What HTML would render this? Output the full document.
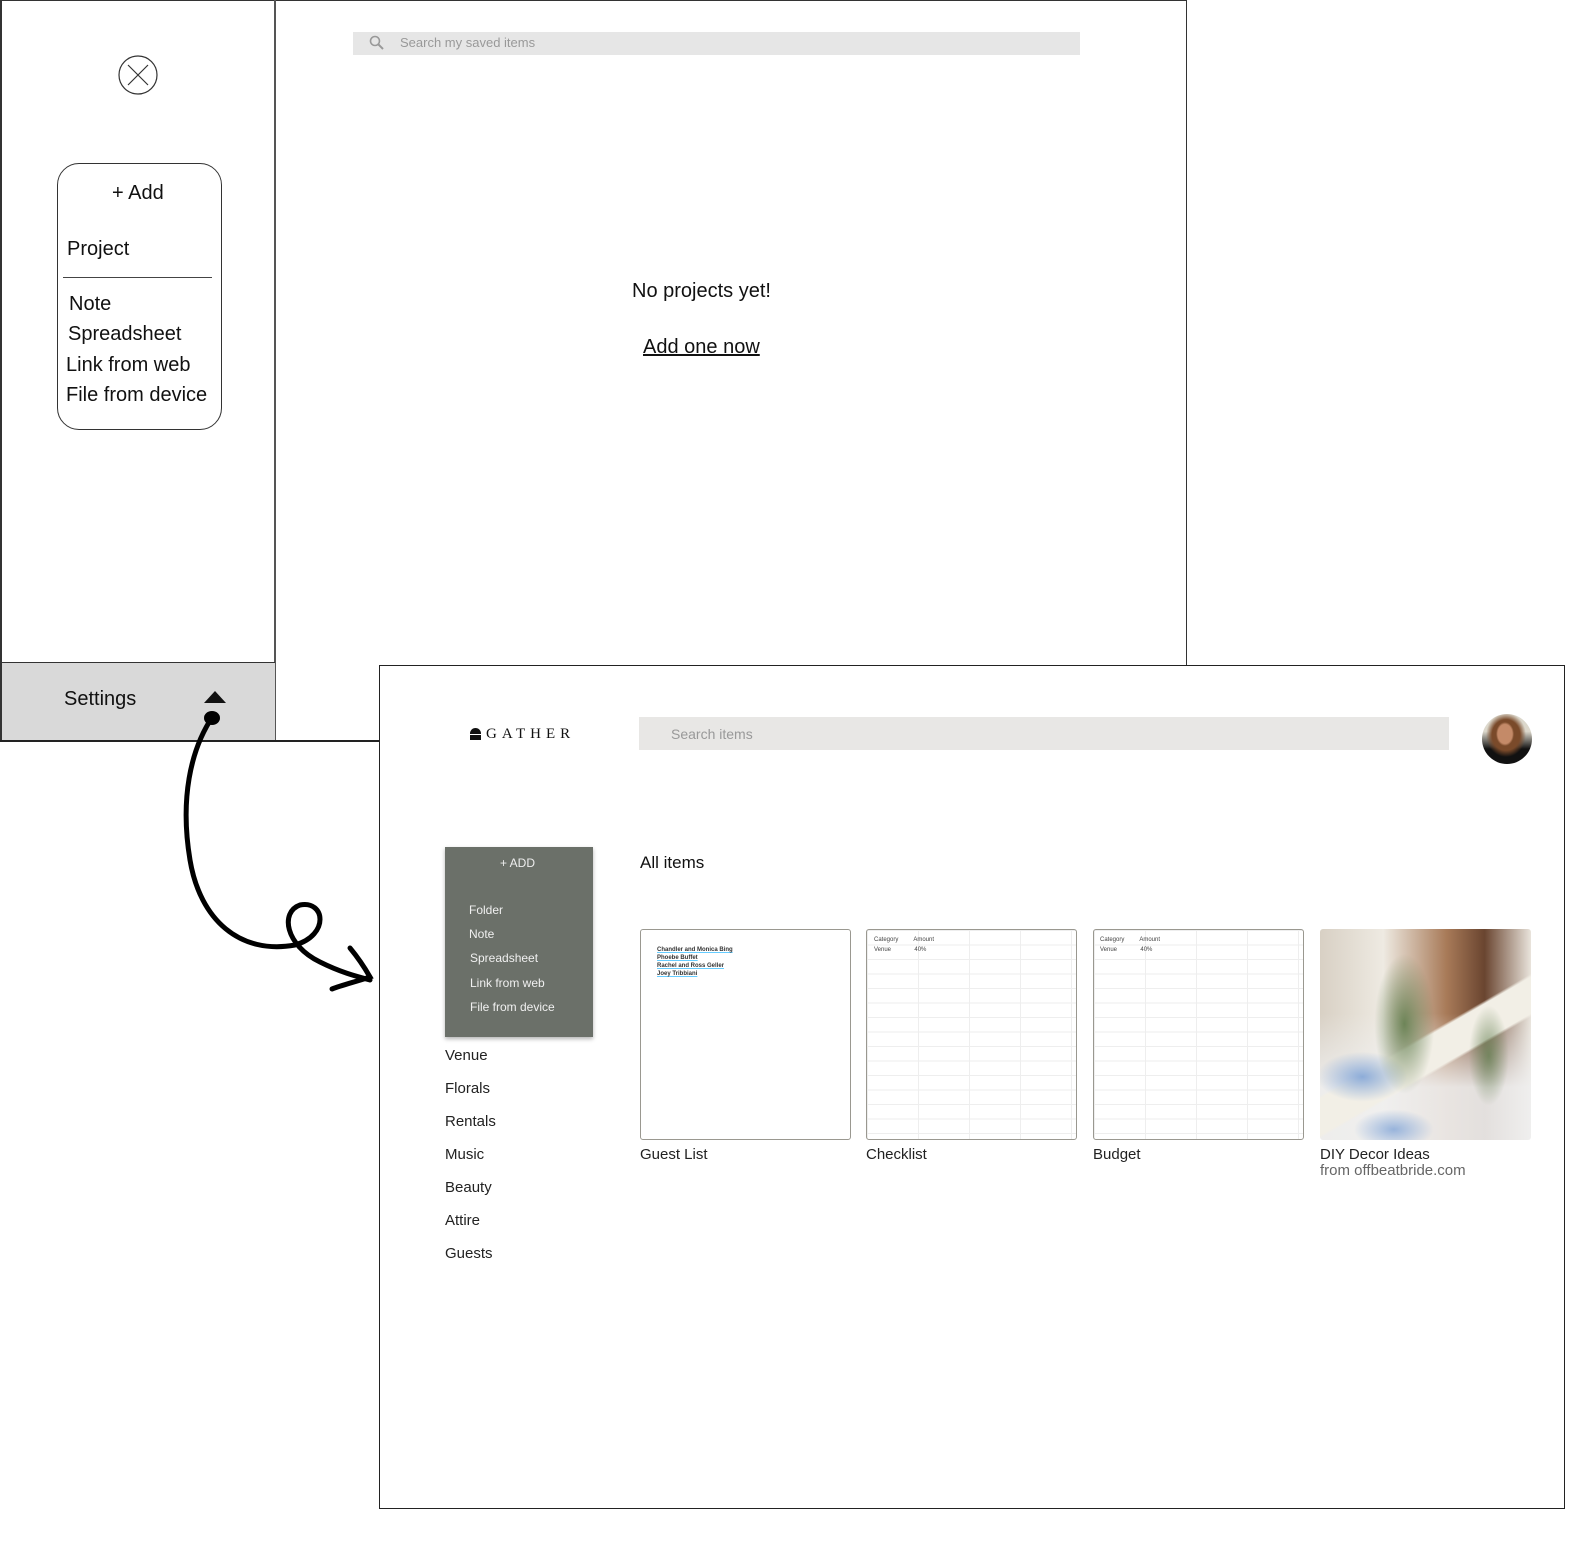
<!DOCTYPE html>
<html><head><meta charset="utf-8"><style>
*{margin:0;padding:0;box-sizing:border-box}
body{width:1586px;height:1557px;background:#fff;position:relative;overflow:hidden;font-family:"Liberation Sans",sans-serif;color:#111}
.a{position:absolute}
.grid{background-color:#fff;background-image:linear-gradient(#eee 1px,transparent 1px),linear-gradient(90deg,#eee 1px,transparent 1px);background-size:100% 14.5px,51px 100%}
.card{border:1.5px solid #9a9890;border-radius:3px}
.lab{font-size:15px;color:#222}
.side{font-size:15px;color:#222;left:445px}
.dd{color:#f0f0f0;font-size:12px;left:469px}
</style></head><body>
<div class="a" style="left:0;top:0;width:1187px;height:666px;border:1.5px solid #333;border-bottom:none"></div>
<div class="a" style="left:274px;top:0;width:1.5px;height:741px;background:#555"></div>
<div class="a" style="left:0;top:0;width:2px;height:741px;background:#333"></div>
<div class="a" style="left:2px;top:662px;width:273px;height:78px;background:#d9d9d9;border-top:1.5px solid #333"></div>
<div class="a" style="left:0;top:740px;width:380px;height:1.5px;background:#222"></div>
<div class="a" style="left:64px;top:688px;font-size:20px">Settings</div>
<div class="a" style="left:204px;top:691px;width:0;height:0;border-left:11px solid transparent;border-right:11px solid transparent;border-bottom:12px solid #111"></div>
<svg class="a" style="left:118px;top:55px" width="40" height="40"><circle cx="20" cy="20" r="19" fill="none" stroke="#333" stroke-width="1.2"/><path d="M10 10L30 30M30 10L10 30" stroke="#333" stroke-width="1.2"/></svg>
<div class="a" style="left:57px;top:163px;width:165px;height:267px;border:1.2px solid #333;border-radius:22px"></div>
<div class="a" style="left:112px;top:182px;font-size:20px">+ Add</div>
<div class="a" style="left:67px;top:238px;font-size:20px">Project</div>
<div class="a" style="left:63px;top:277px;width:149px;height:1.2px;background:#444"></div>
<div class="a" style="left:69px;top:293px;font-size:20px">Note</div>
<div class="a" style="left:68px;top:323px;font-size:20px">Spreadsheet</div>
<div class="a" style="left:66px;top:354px;font-size:20px">Link from web</div>
<div class="a" style="left:66px;top:384px;font-size:20px">File from device</div>
<div class="a" style="left:353px;top:32px;width:727px;height:23px;background:#e6e6e6"></div>
<svg class="a" style="left:369px;top:35px" width="16" height="16"><circle cx="6" cy="6" r="4.5" fill="none" stroke="#999" stroke-width="1.6"/><path d="M9.5 9.5L14 14" stroke="#999" stroke-width="2"/></svg>
<div class="a" style="left:400px;top:35px;font-size:13px;color:#999">Search my saved items</div>
<div class="a" style="left:632px;top:280px;font-size:20px">No projects yet!</div>
<div class="a" style="left:643px;top:336px;font-size:20px;text-decoration:underline">Add one now</div>
<svg class="a" style="left:0;top:0" width="400" height="1000"><path d="M213 716 C190 750 180 800 190 860 C200 920 240 955 295 945 C330 935 325 900 300 905 C280 912 285 945 320 962 C340 972 355 976 370 980" fill="none" stroke="#000" stroke-width="5" stroke-linecap="round"/><path d="M350 948 C360 960 366 970 370 977 C355 982 342 985 332 989" fill="none" stroke="#000" stroke-width="5" stroke-linecap="round"/><ellipse cx="212" cy="718" rx="8" ry="7" fill="#000"/></svg>
<div class="a" style="left:379px;top:665px;width:1186px;height:844px;border:1.5px solid #222;background:#fff"></div>
<div class="a" style="left:470px;top:728px;width:11px;height:6px;background:#111;border-radius:6px 6px 0 0"></div>
<div class="a" style="left:470px;top:735px;width:11px;height:5px;background:#111"></div>
<div class="a" style="left:486px;top:726px;font-family:'Liberation Serif',serif;font-size:15px;letter-spacing:5px">GATHER</div>
<div class="a" style="left:639px;top:717px;width:810px;height:33px;background:#e8e7e5"></div>
<div class="a" style="left:671px;top:726px;font-size:14px;color:#999">Search items</div>
<div class="a" style="left:1482px;top:714px;width:50px;height:50px;border-radius:50%;overflow:hidden;background:radial-gradient(ellipse 9px 12px at 46% 40%,#c48a68 0 80%,transparent 100%),radial-gradient(ellipse 20px 22px at 48% 42%,#7a4a2a 0 70%,transparent 100%),linear-gradient(180deg,#dcd8cc 0 35%,#111 70%)"></div>
<div class="a" style="left:445px;top:847px;width:148px;height:190px;background:#6b7069;box-shadow:0 2px 4px rgba(0,0,0,.3)"></div>
<div class="a" style="left:500px;top:856px;color:#eee;font-size:12px">+ ADD</div>
<div class="a dd" style="top:903px">Folder</div>
<div class="a dd" style="top:927px">Note</div>
<div class="a dd" style="top:951px;left:470px">Spreadsheet</div>
<div class="a dd" style="top:976px;left:470px">Link from web</div>
<div class="a dd" style="top:1000px;left:470px">File from device</div>
<div class="a side" style="top:1047px">Venue</div>
<div class="a side" style="top:1080px">Florals</div>
<div class="a side" style="top:1113px">Rentals</div>
<div class="a side" style="top:1146px">Music</div>
<div class="a side" style="top:1179px">Beauty</div>
<div class="a side" style="top:1212px">Attire</div>
<div class="a side" style="top:1245px">Guests</div>
<div class="a" style="left:640px;top:853px;font-size:17px">All items</div>
<div class="a card" style="left:640px;top:929px;width:211px;height:211px;background:#fff"></div>
<div class="a" style="left:657px;top:946px;font-size:6px;line-height:8px;color:#333;font-weight:bold;text-decoration:underline;text-decoration-color:#6cf">Chandler and Monica Bing<br>Phoebe Buffet<br>Rachel and Ross Geller<br>Joey Tribbiani</div>
<div class="a card grid" style="left:866px;top:929px;width:211px;height:211px"></div>
<div class="a" style="left:874px;top:935px;font-size:6px;line-height:10px;color:#444">Category &nbsp;&nbsp;&nbsp;&nbsp;&nbsp;&nbsp;&nbsp;&nbsp;Amount<br>Venue &nbsp;&nbsp;&nbsp;&nbsp;&nbsp;&nbsp;&nbsp;&nbsp;&nbsp;&nbsp;&nbsp;&nbsp;&nbsp;40%</div>
<div class="a card grid" style="left:1093px;top:929px;width:211px;height:211px"></div>
<div class="a" style="left:1100px;top:935px;font-size:6px;line-height:10px;color:#444">Category &nbsp;&nbsp;&nbsp;&nbsp;&nbsp;&nbsp;&nbsp;&nbsp;Amount<br>Venue &nbsp;&nbsp;&nbsp;&nbsp;&nbsp;&nbsp;&nbsp;&nbsp;&nbsp;&nbsp;&nbsp;&nbsp;&nbsp;40%</div>
<div class="a" style="left:1320px;top:929px;width:211px;height:211px;border-radius:3px;background:
radial-gradient(ellipse 30px 70px at 40% 45%,rgba(90,120,70,.85),transparent),
radial-gradient(ellipse 20px 50px at 80% 60%,rgba(90,120,70,.7),transparent),
radial-gradient(ellipse 45px 25px at 20% 70%,rgba(130,165,215,.9),transparent),
radial-gradient(ellipse 40px 20px at 35% 95%,rgba(130,165,215,.8),transparent),
linear-gradient(150deg,transparent 50%,#f2efe6 51% 62%,transparent 63%),
linear-gradient(180deg,rgba(255,255,255,0) 40%,rgba(240,240,240,.9) 75%),
linear-gradient(90deg,#d8d0c4 0%,#eeeae2 30%,#a87a58 60%,#6a4530 78%,#e9e4dc 100%)"></div>
<div class="a lab" style="left:640px;top:1146px">Guest List</div>
<div class="a lab" style="left:866px;top:1146px">Checklist</div>
<div class="a lab" style="left:1093px;top:1146px">Budget</div>
<div class="a lab" style="left:1320px;top:1146px">DIY Decor Ideas</div>
<div class="a" style="left:1320px;top:1162px;font-size:15px;color:#666">from offbeatbride.com</div>
</body></html>
